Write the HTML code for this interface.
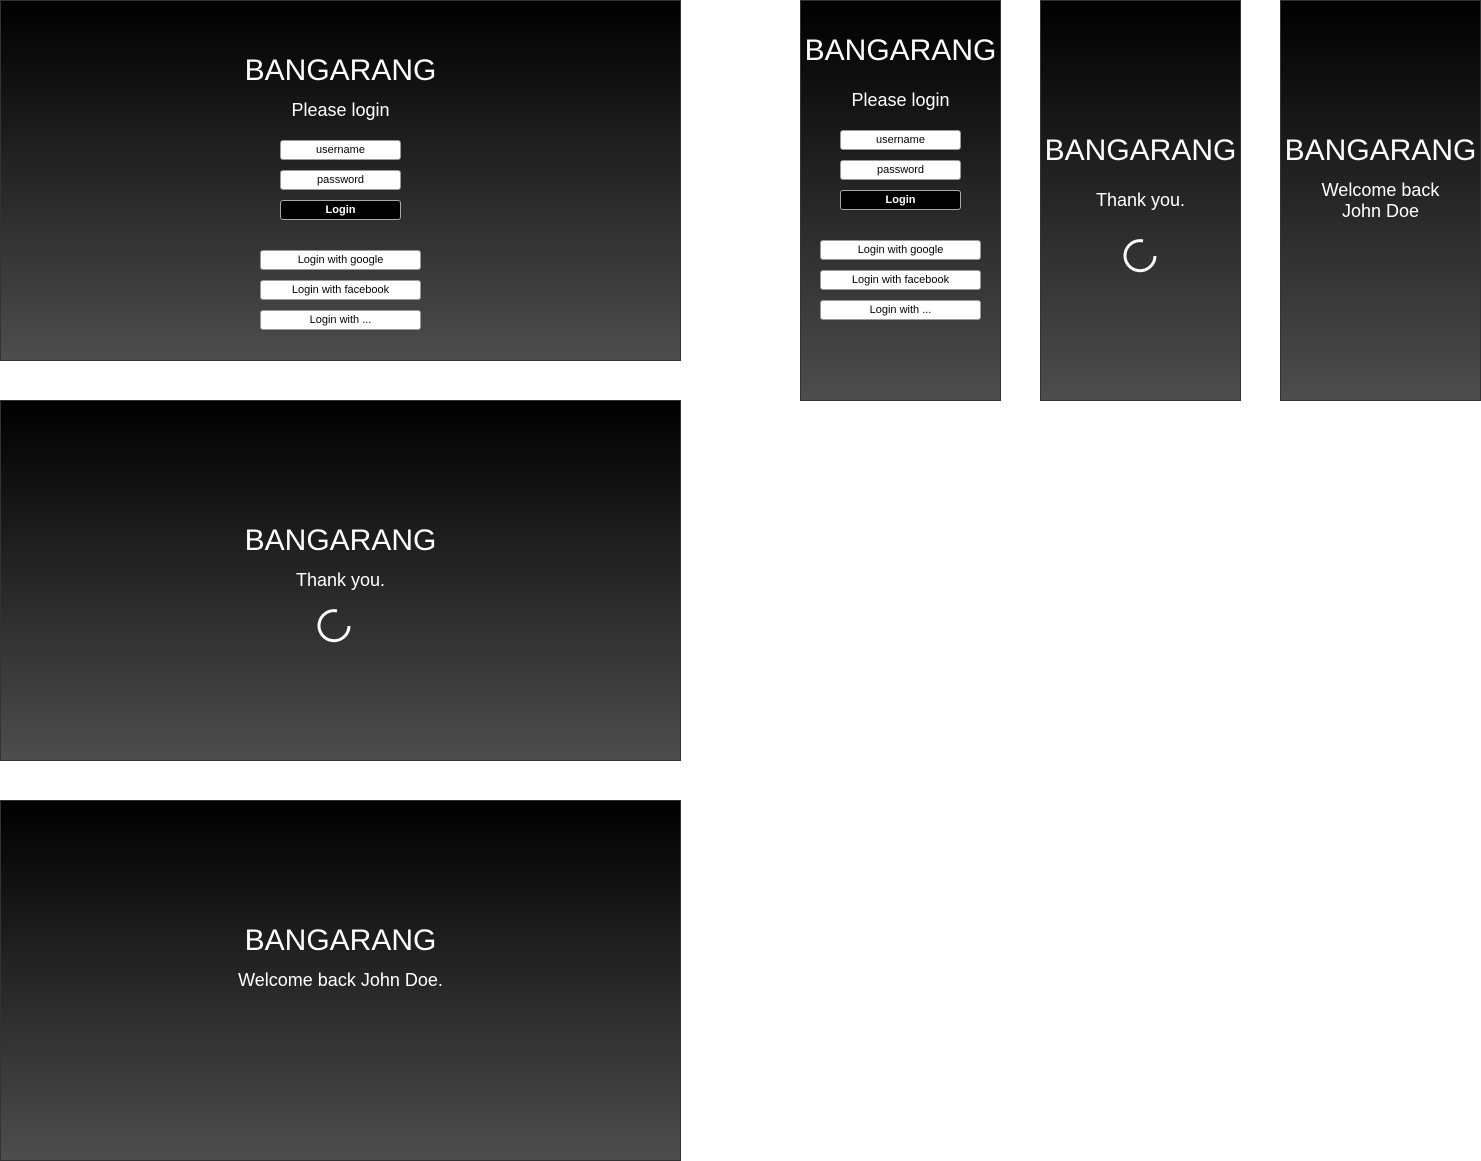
<!DOCTYPE html>
<html><head><style>
body{margin:0;width:1481px;height:1161px;background:#fff;position:relative;overflow:hidden;font-family:"Liberation Sans",Arial,sans-serif;color:#fff}
.f{position:absolute;box-sizing:border-box;border:1px solid #333;background:linear-gradient(#000,#4d4d4d)}
.t{position:absolute;left:-1px;right:-1px;text-align:center;white-space:nowrap}
.h{font-size:30px;line-height:34px}
.s{font-size:18px;line-height:21px}
.b{position:absolute;box-sizing:border-box;background:#fff;color:#000;border:1px solid #999;border-radius:3px;font-size:11px;text-align:center;line-height:18px;height:20px}
.k{background:#000;color:#fff;border-color:#aaa;font-weight:bold}
svg{position:absolute}
</style></head><body>
<div class="f" style="left:0;top:0;width:681px;height:361px">
<div class="t h" style="top:53px">BANGARANG</div>
<div class="t s" style="top:99px">Please login</div>
<div class="b" style="left:279px;top:139px;width:121px">username</div>
<div class="b" style="left:279px;top:169px;width:121px">password</div>
<div class="b k" style="left:279px;top:199px;width:121px">Login</div>
<div class="b" style="left:259px;top:249px;width:161px">Login with google</div>
<div class="b" style="left:259px;top:279px;width:161px">Login with facebook</div>
<div class="b" style="left:259px;top:309px;width:161px">Login with ...</div>
</div>
<div class="f" style="left:0;top:400px;width:681px;height:361px">
<div class="t h" style="top:123px">BANGARANG</div>
<div class="t s" style="top:169px">Thank you.</div>
<svg style="left:313px;top:205px" width="40" height="40"><path d="M23 5 A15 15 0 1 0 35 20" fill="none" stroke="#fff" stroke-width="3"/></svg>
</div>
<div class="f" style="left:0;top:800px;width:681px;height:361px">
<div class="t h" style="top:123px">BANGARANG</div>
<div class="t s" style="top:169px">Welcome back John Doe.</div>
</div>
<div class="f" style="left:800px;top:0;width:201px;height:401px">
<div class="t h" style="top:33px">BANGARANG</div>
<div class="t s" style="top:89px">Please login</div>
<div class="b" style="left:39px;top:129px;width:121px">username</div>
<div class="b" style="left:39px;top:159px;width:121px">password</div>
<div class="b k" style="left:39px;top:189px;width:121px">Login</div>
<div class="b" style="left:19px;top:239px;width:161px">Login with google</div>
<div class="b" style="left:19px;top:269px;width:161px">Login with facebook</div>
<div class="b" style="left:19px;top:299px;width:161px">Login with ...</div>
</div>
<div class="f" style="left:1040px;top:0;width:201px;height:401px">
<div class="t h" style="top:133px">BANGARANG</div>
<div class="t s" style="top:189px">Thank you.</div>
<svg style="left:79px;top:235px" width="40" height="40"><path d="M23 5 A15 15 0 1 0 35 20" fill="none" stroke="#fff" stroke-width="3"/></svg>
</div>
<div class="f" style="left:1280px;top:0;width:201px;height:401px">
<div class="t h" style="top:133px">BANGARANG</div>
<div class="t s" style="top:179px">Welcome back</div>
<div class="t s" style="top:200px">John Doe</div>
</div>
</body></html>
